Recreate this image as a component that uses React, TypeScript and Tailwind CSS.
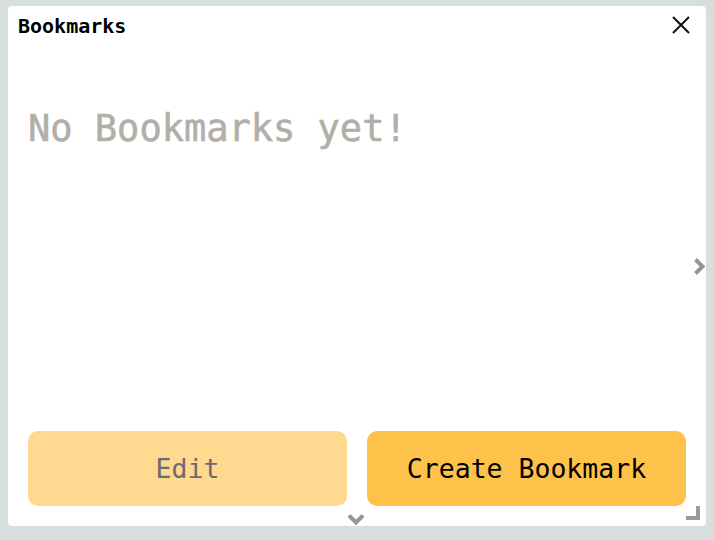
import React from "react";

export default function App() {
  const mono = { fontFamily: '"DejaVu Sans Mono", "Liberation Mono", monospace' };
  return (
    <div className="w-[714px] h-[540px] bg-[#d6dfdc] pt-[6px] pl-[8px] overflow-hidden" style={mono}>
      <div className="relative w-[698px] h-[520px] bg-white rounded-[4px] flex flex-col">
        <div className="h-[40px] flex items-start justify-between pl-[10px] pr-[16px] pt-[8px]">
          <span className="text-[20px] leading-[24px] font-bold text-black">Bookmarks</span>
          <svg width="18" height="18" viewBox="0 0 18 18" className="mt-[2px]">
            <path d="M1 1 L17 17 M17 1 L1 17" stroke="#111" strokeWidth="2" fill="none" />
          </svg>
        </div>
        <div className="flex-1 px-[20px] pt-[61px]">
          <div className="text-[37px] leading-[44px] text-[#b1afa8]" style={{ WebkitTextStroke: "0.6px #b1afa8" }}>No Bookmarks yet!</div>
        </div>
        <div className="flex gap-[20px] px-[20px] pb-[20px]">
          <button className="flex-1 h-[75px] rounded-[10px] bg-[#fed98f] text-[26.5px] text-[#6b6b6b] flex items-center justify-center" style={mono}>
            Edit
          </button>
          <button className="flex-1 h-[75px] rounded-[10px] bg-[#fec24b] text-[26.5px] text-black flex items-center justify-center" style={mono}>
            Create Bookmark
          </button>
        </div>
        <svg className="absolute left-[685px] top-[251px]" width="13" height="19" viewBox="0 0 13 19">
          <path d="M2.5 2.5 L9.5 9.5 L2.5 16.5" stroke="#969696" strokeWidth="4" fill="none" />
        </svg>
        <svg className="absolute left-[339px] top-[507px]" width="18" height="13" viewBox="0 0 18 13">
          <path d="M2 2.5 L9 9.5 L16 2.5" stroke="#969696" strokeWidth="4" fill="none" />
        </svg>
        <svg className="absolute left-[678px] top-[500px]" width="14" height="14" viewBox="0 0 14 14">
          <path d="M0 12 L12 12 L12 0" stroke="#9a9a9a" strokeWidth="4" fill="none" />
        </svg>
      </div>
    </div>
  );
}
